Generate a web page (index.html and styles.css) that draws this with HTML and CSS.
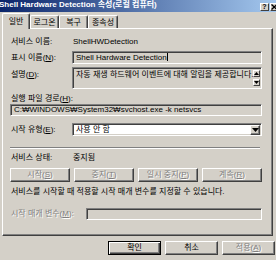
FILE: index.html
```html
<!DOCTYPE html>
<html lang="ko">
<head>
    <meta charset="UTF-8">
    <meta name="viewport" content="width=device-width, initial-scale=1.0">
    <title>Shell Hardware Detection 속성(로컬 컴퓨터)</title>
    <link rel="stylesheet" href="styles.css">
</head>
<body>
<div class="window">
    <div class="titlebar">
        <span class="title">Shell Hardware Detection 속성(로컬 컴퓨터)</span>
        <span class="cap-btn help">?</span>
        <span class="cap-btn close">
            <svg width="7" height="6" viewBox="0 0 7 6"><path d="M0.5 0.5 L6 5.5 M6 0.5 L0.5 5.5" stroke="#000" stroke-width="1.4"/></svg>
        </span>
    </div>

    <div class="tabs">
        <span class="tab active">일반</span>
        <span class="tab w29">로그온</span>
        <span class="tab w29">복구</span>
        <span class="tab w30">종속성</span>
    </div>

    <div class="panel">
        <div class="row r-name">
            <span class="label">서비스 이름:</span>
            <span class="value">ShellHWDetection</span>
        </div>
        <div class="row r-display">
            <span class="label">표시 이름(<u>N</u>):</span>
            <span class="edit ro">Shell Hardware Detection<span class="caret"></span></span>
        </div>
        <div class="row r-desc">
            <span class="label top">설명(<u>D</u>):</span>
            <span class="edit ro memo">
                <span class="memo-text">자동 재생 하드웨어 이벤트에 대해 알림을 제공합니다.</span>
                <span class="scroll">
                    <span class="sbtn"><svg width="5" height="3" viewBox="0 0 5 3"><path d="M2.5 0 L5 3 L0 3 Z" fill="#000"/></svg></span>
                    <span class="sbtn"><svg width="5" height="3" viewBox="0 0 5 3"><path d="M0 0 L5 0 L2.5 3 Z" fill="#000"/></svg></span>
                </span>
            </span>
        </div>
        <div class="line r-pathlabel">실행 파일 경로(<u>H</u>):</div>
        <div class="edit ro path">C:₩WINDOWS₩System32₩svchost.exe -k netsvcs</div>
        <div class="row r-start">
            <span class="label">시작 유형(<u>E</u>):</span>
            <span class="edit combo">
                <span class="combo-text">사용 안 함</span>
                <span class="drop"><svg width="7" height="4" viewBox="0 0 7 4"><path d="M0 0 L7 0 L3.5 4 Z" fill="#000"/></svg></span>
            </span>
        </div>
        <div class="sep"></div>
        <div class="row r-status">
            <span class="label">서비스 상태:</span>
            <span class="value">중지됨</span>
        </div>
        <div class="svc-buttons">
            <span class="btn disabled">시작(<u>S</u>)</span>
            <span class="btn disabled">중지(<u>T</u>)</span>
            <span class="btn disabled">일시 중지(<u>P</u>)</span>
            <span class="btn disabled">계속(<u>R</u>)</span>
        </div>
        <div class="line r-hint">서비스를 시작할 때 적용할 시작 매개 변수를 지정할 수 있습니다.</div>
        <div class="row r-params">
            <span class="label wide disabled">시작 매개 변수(<u>M</u>):</span>
            <span class="edit ro"></span>
        </div>
    </div>

    <div class="footer">
        <span class="btn default">확인</span>
        <span class="btn">취소</span>
        <span class="btn disabled">적용(<u>A</u>)</span>
    </div>
</div>
</body>
</html>
```

FILE: styles.css
```css
html, body {
    margin: 0;
    height: 100%;
    overflow: hidden;
}
body {
    background-color: #d4d0c8;
    font-family: "Liberation Sans", "Noto Sans CJK KR", sans-serif;
    font-size: 8px;
    line-height: 10px;
    color: #000;
}
u {
    text-decoration: underline;
}

.window {
    margin-top: -6px;
    width: 280px;
}

/* title bar */
.titlebar {
    height: 18px;
    display: flex;
    background: linear-gradient(to right, #0a246a, #a6caf0);
}
.title {
    margin: 6px 0 0 -1px;
    color: #fff;
    font-weight: bold;
    white-space: nowrap;
}
.cap-btn {
    margin-top: 9px;
    width: 9px;
    height: 8px;
    box-sizing: border-box;
    background-color: #d4d0c8;
    border: 1px solid;
    border-color: #fff #404040 #404040 #fff;
    display: flex;
    align-items: center;
    justify-content: center;
    font-size: 7px;
    font-weight: bold;
    line-height: 6px;
}
.help {
    margin-left: auto;
    margin-right: 1px;
}
.close {
    margin-right: 1px;
}

/* tabs */
.tabs {
    height: 16px;
    display: flex;
    align-items: flex-end;
    padding-left: 2px;
}
.tab {
    height: 13px;
    width: 29px;
    box-sizing: border-box;
    border: 1px solid;
    border-bottom: none;
    border-color: #fff #404040 #404040 #fff;
    border-radius: 2px 2px 0 0;
    box-shadow: inset -1px 0 #808080;
    display: flex;
    align-items: center;
    justify-content: center;
    padding-top: 1px;
    white-space: nowrap;
}
.tab.active {
    width: 28px;
    height: 16px;
    margin-bottom: -1px;
    position: relative;
    z-index: 1;
    background-color: #d4d0c8;
    padding-bottom: 1px;
}
.w29 { width: 29px; }
.w30 { width: 30px; }

/* panel */
.panel {
    margin-left: 2px;
    width: 271px;
    box-sizing: border-box;
    border: 1px solid;
    border-color: #fff #404040 #404040 #fff;
    box-shadow: inset -1px -1px #808080;
    padding: 7px 10px 15px 7px;
}
.row {
    display: flex;
    align-items: center;
}
.label {
    width: 62px;
    flex: none;
    padding-left: 1px;
    box-sizing: border-box;
    white-space: nowrap;
}
.label.top {
    align-self: flex-start;
    margin-top: 3px;
}
.label.wide {
    width: 76px;
}
.value {
    padding-left: 1px;
}
.line {
    padding-left: 1px;
    white-space: nowrap;
}
.disabled {
    color: #808080;
    text-shadow: 1px 1px #fff;
}

.edit {
    flex: 1;
    box-sizing: border-box;
    border: 1px solid;
    border-color: #808080 #fff #fff #808080;
    box-shadow: inset 1px 1px #404040, inset -1px -1px #d4d0c8;
    background-color: #fff;
    padding: 1px 2px 0 3px;
    white-space: nowrap;
    overflow: hidden;
}
.edit.ro {
    background-color: #d4d0c8;
}
.caret {
    display: inline-block;
    width: 1px;
    height: 8px;
    background-color: #000;
    vertical-align: -1px;
}

.r-name { height: 12px; margin-bottom: 3px; }
.r-display .edit { height: 13px; }
.r-display { margin-bottom: 3px; }
.r-desc .edit { height: 22px; }

.memo {
    display: flex;
    padding: 2px 1px 2px 3px;
}
.memo-text {
    flex: 1;
}
.scroll {
    width: 7px;
    display: flex;
    flex-direction: column;
    gap: 2px;
}
.sbtn {
    height: 8px;
    box-sizing: border-box;
    background-color: #d4d0c8;
    border: 1px solid;
    border-color: #fff #404040 #404040 #fff;
    display: flex;
    align-items: center;
    justify-content: center;
}

.r-pathlabel { margin-top: 5px; }
.path {
    height: 12px;
    padding-top: 0;
}

.r-start { margin-top: 7px; }
.combo {
    height: 13px;
    display: flex;
    align-items: center;
    padding: 0 1px 0 3px;
}
.combo-text {
    flex: 1;
}
.drop {
    width: 10px;
    height: 10px;
    box-sizing: border-box;
    background-color: #d4d0c8;
    border: 1px solid;
    border-color: #fff #404040 #404040 #fff;
    box-shadow: inset -1px -1px #808080;
    display: flex;
    align-items: center;
    justify-content: center;
}

.sep {
    margin-top: 11px;
    height: 0;
    border-top: 1px solid #808080;
    border-bottom: 1px solid #fff;
    margin-right: 2px;
}
.r-status { margin-top: 4px; height: 10px; }

.btn {
    height: 14px;
    box-sizing: border-box;
    background-color: #d4d0c8;
    border: 1px solid;
    border-color: #fff #404040 #404040 #fff;
    box-shadow: inset -1px -1px #808080;
    display: flex;
    align-items: center;
    justify-content: center;
    white-space: nowrap;
}
.btn.default {
    border-color: #000;
    box-shadow: inset 1px 1px #fff, inset -1px -1px #404040, inset -2px -2px #808080;
}
.svc-buttons {
    margin-top: 5px;
    display: grid;
    grid-template-columns: repeat(4, 1fr);
    gap: 4px;
}
.r-hint { margin-top: 5px; }
.r-params { margin-top: 11px; }
.r-params .edit { height: 12px; }

.footer {
    margin-top: 5px;
    padding-left: 108px;
    display: flex;
    gap: 4px;
}
.footer .btn {
    width: 53px;
}
```
